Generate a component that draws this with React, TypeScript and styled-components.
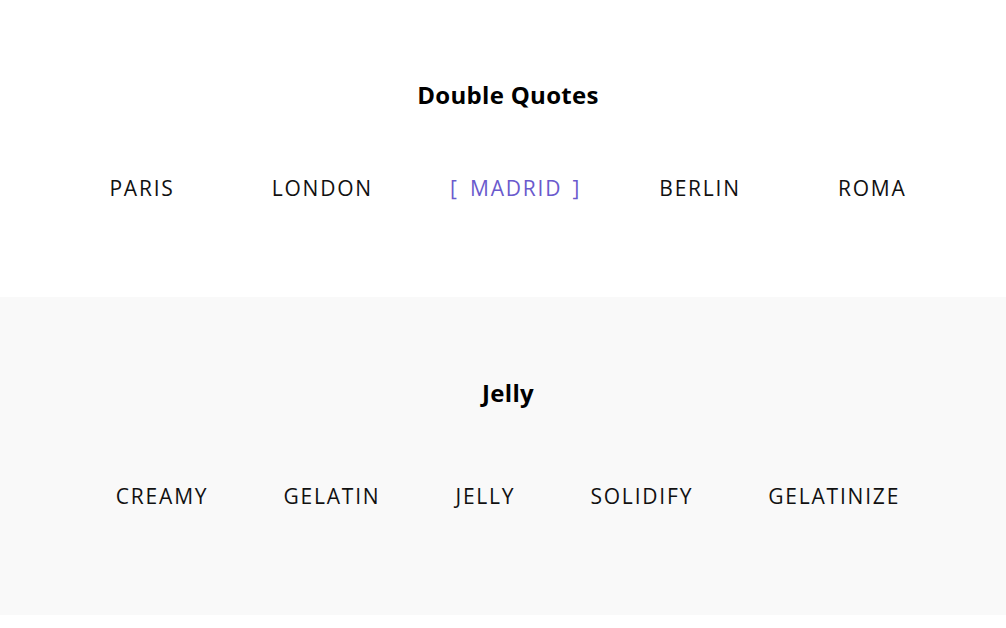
import React from "react";
import styled, { createGlobalStyle } from "styled-components";

const GlobalStyle = createGlobalStyle`
  html, body {
    margin: 0;
    padding: 0;
    background: #fff;
    font-family: "Open Sans", "Noto Sans", sans-serif;
  }
`;

const Page = styled.main`
  padding-left: 10px;
`;

const Section = styled.section<{ $grey?: boolean; $top: number; $gap: number; $bottom: number }>`
  display: flex;
  flex-direction: column;
  align-items: center;
  padding: ${(p) => p.$top}px 0 ${(p) => p.$bottom}px;
  gap: ${(p) => p.$gap}px;
  background: ${(p) => (p.$grey ? "#f9f9f9" : "#fff")};
  margin-left: ${(p) => (p.$grey ? "-10px" : "0")};
  padding-left: ${(p) => (p.$grey ? "10px" : "0")};
`;

const Title = styled.h2`
  margin: 0;
  font-size: 24px;
  font-weight: 700;
  line-height: 30px;
  letter-spacing: 0.3px;
  color: #000;
`;

const Nav = styled.nav<{ $gap: number }>`
  display: flex;
  gap: ${(p) => p.$gap}px;
`;

const Link = styled.a<{ $active?: boolean }>`
  position: relative;
  font-size: 21px;
  line-height: 30px;
  letter-spacing: 1.8px;
  text-transform: uppercase;
  color: ${(p) => (p.$active ? "#6a5acd" : "#111")};
  text-decoration: none;
  cursor: pointer;

  ${(p) =>
    p.$active &&
    `
    &::before,
    &::after {
      position: absolute;
      top: 0;
    }
    &::before {
      content: "[";
      left: -20px;
    }
    &::after {
      content: "]";
      right: -19px;
    }
  `}
`;

const cities = ["Paris", "London", "Madrid", "Berlin", "Roma"];
const jelly = ["Creamy", "Gelatin", "Jelly", "Solidify", "Gelatinize"];

const App: React.FC = () => (
  <Page>
    <GlobalStyle />
    <Section $top={80} $gap={63} $bottom={94}>
      <Title>Double Quotes</Title>
      <Nav $gap={97}>
        {cities.map((c) => (
          <Link key={c} $active={c === "Madrid"}>
            {c}
          </Link>
        ))}
      </Nav>
    </Section>
    <Section $grey $top={81} $gap={73} $bottom={104}>
      <Title>Jelly</Title>
      <Nav $gap={75}>
        {jelly.map((j) => (
          <Link key={j}>{j}</Link>
        ))}
      </Nav>
    </Section>
  </Page>
);

export default App;
